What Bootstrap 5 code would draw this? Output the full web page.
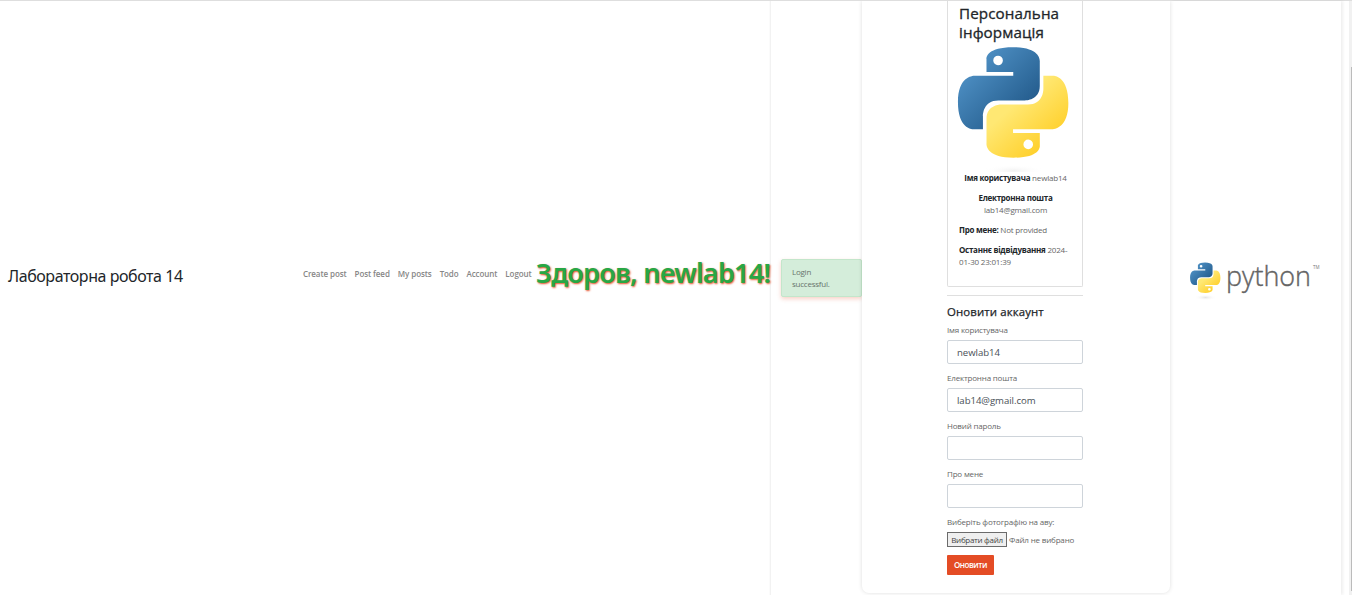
<!DOCTYPE html>
<html lang="uk">
<head>
<meta charset="utf-8">
<title>Лабораторна робота 14</title>
<link href="https://cdn.jsdelivr.net/npm/bootstrap@5.3.0/dist/css/bootstrap.min.css" rel="stylesheet">
<style>
body{height:595px;overflow:hidden;background:#fff;color:#212529;font:8px/12px "Segoe UI","Open Sans","Noto Sans",sans-serif}
.page{height:595px;border-top:1px solid #dedede}
.brand-col{width:302px;padding:0 0 0 8px}
.brand-name,.greeting{font-family:"Comic Sans MS","Noto Sans",sans-serif;white-space:nowrap}
.brand-name{font-size:16px;line-height:24px;color:#212529;letter-spacing:-.44px;margin-top:-45px}
.menu-col{width:234px;padding:0 0 49px 1px;gap:8px}
.menu-col .nav-link{color:#868686;font-weight:600;font-size:8px;line-height:12px;white-space:nowrap;letter-spacing:-.09px}
.greet-col{width:235px;box-shadow:inset -3px 0 2px -2px #eee}
.greeting{font-size:27px;line-height:36px;font-weight:600;color:#28a745;text-shadow:1px 1px 2px #e44c25;letter-spacing:-.72px;margin-top:-50px}
.notice-col{width:91px;padding-left:10px}
.notice{width:81px;height:38px;padding:6px 10px;border:1px solid #c3e6cb;background:#d4edda;border-radius:2px;color:#68746c;box-shadow:0 2px 4px #e44c2540;margin:-40px 0 0;letter-spacing:-.24px}
.panel{width:308px;height:592px;padding:0 87px 0 85px;border-radius:0 0 7px 7px;box-shadow:0 0 4px #0002;background:#fff;clip-path:inset(0 -5px -5px -5px)}
.profile{width:136px;height:286px;border:1px solid #dfdfdf;border-top:0;border-radius:0 0 2px 2px;padding:3px 10px 0 11px;color:#666}
.profile h1{font-size:15.2px;line-height:19px;font-weight:500;margin:0 0 1px;color:#212529;-webkit-text-stroke:.3px #212529;letter-spacing:.1px;white-space:nowrap}
.profile svg{width:112px;height:129px;margin-left:-2px;display:block}
.profile p,.upd label{white-space:nowrap}
.profile p{margin:0 0 8px;letter-spacing:-.19px}
.profile b{color:#212529;font-weight:700;letter-spacing:-.27px}
.sep{width:136px;height:1px;background:#dfdfdf;margin:8px 0 9px}
.upd{width:136px;color:#666;letter-spacing:-.18px}
.upd h2{font-size:11.4px;line-height:14px;font-weight:500;margin:0 0 5px;color:#212529;-webkit-text-stroke:.25px #212529;letter-spacing:.12px;white-space:nowrap}
.upd label{display:block;margin:0 0 4px;line-height:12px}
.upd .form-control{height:24px;padding:0 9px;font-size:9.6px;line-height:22px;border:1px solid #ced4da;border-radius:2px;margin-bottom:8px;color:#495057;letter-spacing:-.05px}
.file-btn{width:60px;height:15px;border:1px solid #6b6b6b;background:#efefef;color:#444;font-size:8px;line-height:12px;padding:0;white-space:nowrap;letter-spacing:-.3px}
.send{width:47px;height:20px;margin-top:8px;background:#e44c25;color:#fff;border:0;border-radius:1px;font-size:8px;line-height:12px;padding:0;font-weight:600;display:block;letter-spacing:-.45px}
.logo-col{width:171px;height:594px;box-shadow:2px 0 3px #0001}
.logo-box{width:171px;height:56px;background:#fff;margin-top:-32px}
.rail{width:3px;margin-left:8px;background:#f1f1f1;padding:66px 0 3px 2px}
.rail div{background:#bbb;height:524px;width:1px}
</style>
</head>
<body>
<svg width="0" height="0" class="position-absolute">
<defs>
<linearGradient id="blue" x1="0" y1="0" x2=".8" y2=".8"><stop stop-color="#5a9fd4"/><stop offset="1" stop-color="#245c8d"/></linearGradient>
<linearGradient id="gold" x1=".2" y1=".25" x2=".6" y2=".7"><stop stop-color="#ffd12f"/><stop offset="1" stop-color="#ffe873"/></linearGradient>
<radialGradient id="shade"><stop stop-color="#bbb" stop-opacity=".4"/><stop offset="1" stop-color="#fff" stop-opacity="0"/></radialGradient>
<path id="snake" d="M99.75 67.469C71.718 67.469 73.469 79.625 73.469 79.625L73.5 92.219H100.25V96H62.875C62.875 96 44.938 93.966 44.938 122.25C44.938 150.534 60.594 149.531 60.594 149.531H69.938V136.406S69.434 120.75 85.344 120.75H111.875S126.781 120.991 126.781 106.344V82.125S129.044 67.469 99.75 67.469ZM85 75.938A4.813 4.813 0 1 1 85 85.563 4.813 4.813 0 0 1 85 75.938Z"/>
<g id="snakes"><use href="#snake" fill="url(#blue)"/><use href="#snake" fill="url(#gold)" transform="translate(0 .7) rotate(180 100.148 122.39)"/></g>
</defs>
</svg>
<div class="page d-flex">
  <div class="brand-col d-flex align-items-center"><span class="brand-name">Лабораторна робота 14</span></div>
  <nav class="menu-col nav flex-nowrap align-items-center">
    <a class="nav-link p-0" href="#">Create post</a><a class="nav-link p-0" href="#">Post feed</a><a class="nav-link p-0" href="#">My posts</a><a class="nav-link p-0" href="#">Todo</a><a class="nav-link p-0" href="#">Account</a><a class="nav-link p-0" href="#">Logout</a>
  </nav>
  <div class="greet-col d-flex align-items-center"><span class="greeting">Здоров, newlab14!</span></div>
  <div class="notice-col d-flex align-items-center"><div class="notice">Login<br>successful.</div></div>
  <main class="panel">
    <section class="profile">
      <h1>Персональна<br>інформація</h1>
      <svg viewBox="44 63.3 112 129"><use href="#snakes"/><ellipse cx="100.5" cy="191" rx="31" ry="6" fill="url(#shade)" opacity=".5"/></svg>
      <p class="text-center"><b>Імя користувача</b> newlab14</p>
      <p class="text-center"><b>Електронна пошта</b><br>lab14@gmail.com</p>
      <p><b>Про мене:</b> Not provided</p>
      <p><b>Останнє відвідування</b> 2024-<br>01-30 23:01:39</p>
    </section>
    <div class="sep"></div>
    <form class="upd">
      <h2>Оновити аккаунт</h2>
      <label>Імя користувача</label><input class="form-control" value="newlab14">
      <label>Електронна пошта</label><input class="form-control" value="lab14@gmail.com">
      <label>Новий пароль</label><input class="form-control" type="password">
      <label>Про мене</label><input class="form-control">
      <label>Виберіть фотографію на аву:</label>
      <div class="d-flex align-items-center text-nowrap" style="gap:2px"><button type="button" class="file-btn">Вибрати файл</button><span>Файл не вибрано</span></div>
      <button type="button" class="btn send">Оновити</button>
    </form>
  </main>
  <aside class="logo-col d-flex align-items-center"><div class="logo-box">
    <svg class="d-block" width="171" height="56" viewBox="0 0 171 56">
      <g transform="translate(7.7 -10) scale(.275)"><use href="#snakes"/></g>
      <ellipse cx="35.5" cy="43.5" rx="11" ry="3" fill="url(#shade)"/>
      <text x="56" y="31.5" font-family="Open Sans,sans-serif" font-weight="300" font-size="28" fill="#646464" stroke="#646464" stroke-width=".4" textLength="85" lengthAdjust="spacingAndGlyphs">python</text>
      <text x="143" y="15" font-family="Open Sans,sans-serif" font-size="4.5" fill="#777">TM</text>
    </svg></div></aside>
  <div class="rail"><div></div></div>
</div>
</body>
</html>
